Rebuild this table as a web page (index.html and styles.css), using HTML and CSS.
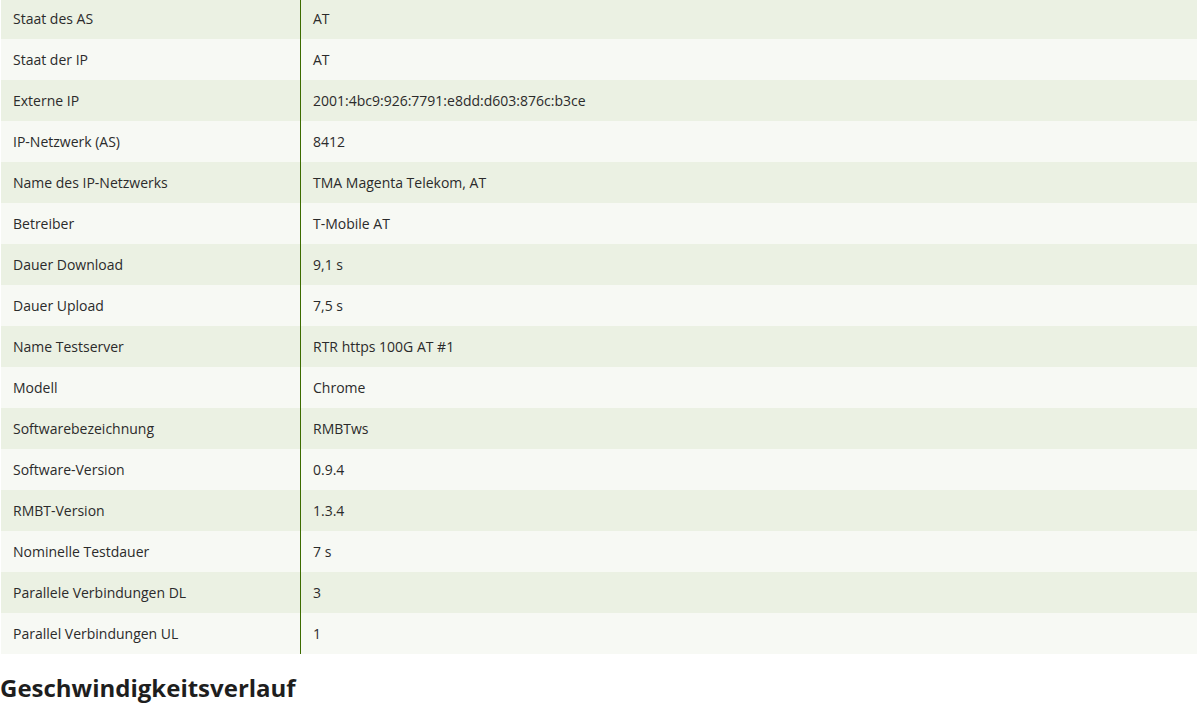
FILE: index.html
```html
<!DOCTYPE html>
<html lang="de">
<head>
<meta charset="utf-8">
<link rel="stylesheet" href="styles.css">
</head>
<body>
<table class="details">
<tbody>
<tr><td class="key">Staat des AS</td><td class="val">AT</td></tr>
<tr><td class="key">Staat der IP</td><td class="val">AT</td></tr>
<tr><td class="key">Externe IP</td><td class="val">2001:4bc9:926:7791:e8dd:d603:876c:b3ce</td></tr>
<tr><td class="key">IP-Netzwerk (AS)</td><td class="val">8412</td></tr>
<tr><td class="key">Name des IP-Netzwerks</td><td class="val">TMA Magenta Telekom, AT</td></tr>
<tr><td class="key">Betreiber</td><td class="val">T-Mobile AT</td></tr>
<tr><td class="key">Dauer Download</td><td class="val">9,1 s</td></tr>
<tr><td class="key">Dauer Upload</td><td class="val">7,5 s</td></tr>
<tr><td class="key">Name Testserver</td><td class="val">RTR https 100G AT #1</td></tr>
<tr><td class="key">Modell</td><td class="val">Chrome</td></tr>
<tr><td class="key">Softwarebezeichnung</td><td class="val">RMBTws</td></tr>
<tr><td class="key">Software-Version</td><td class="val">0.9.4</td></tr>
<tr><td class="key">RMBT-Version</td><td class="val">1.3.4</td></tr>
<tr><td class="key">Nominelle Testdauer</td><td class="val">7 s</td></tr>
<tr><td class="key">Parallele Verbindungen DL</td><td class="val">3</td></tr>
<tr><td class="key">Parallel Verbindungen UL</td><td class="val">1</td></tr>
</tbody>
</table>
<h2 class="section-title">Geschwindigkeitsverlauf</h2>
</body>
</html>
```
FILE: styles.css
```css
html, body {
  margin: 0;
  padding: 0;
  background: #ffffff;
}
body {
  font-family: "Open Sans", "Liberation Sans", sans-serif;
  color: #222222;
  overflow: hidden;
}
.details {
  border-collapse: collapse;
  margin: -2px 0 0 1px;
  width: 1196px;
  font-size: 14px;
  color: #2b2b2b;
}
.details tr {
  height: 41px;
}
.details tr:nth-child(odd) {
  background: #ebf1e3;
}
.details tr:nth-child(even) {
  background: #f7f9f4;
}
.details td {
  padding: 0 12px;
  vertical-align: middle;
  line-height: 20px;
}
.details .key {
  width: 275px;
  border-right: 1px solid #3d6b00;
}
.section-title {
  margin: 18px 0 0 0;
  font-size: 24px;
  font-weight: 700;
  line-height: 32px;
  color: #1e1e1e;
}
```
